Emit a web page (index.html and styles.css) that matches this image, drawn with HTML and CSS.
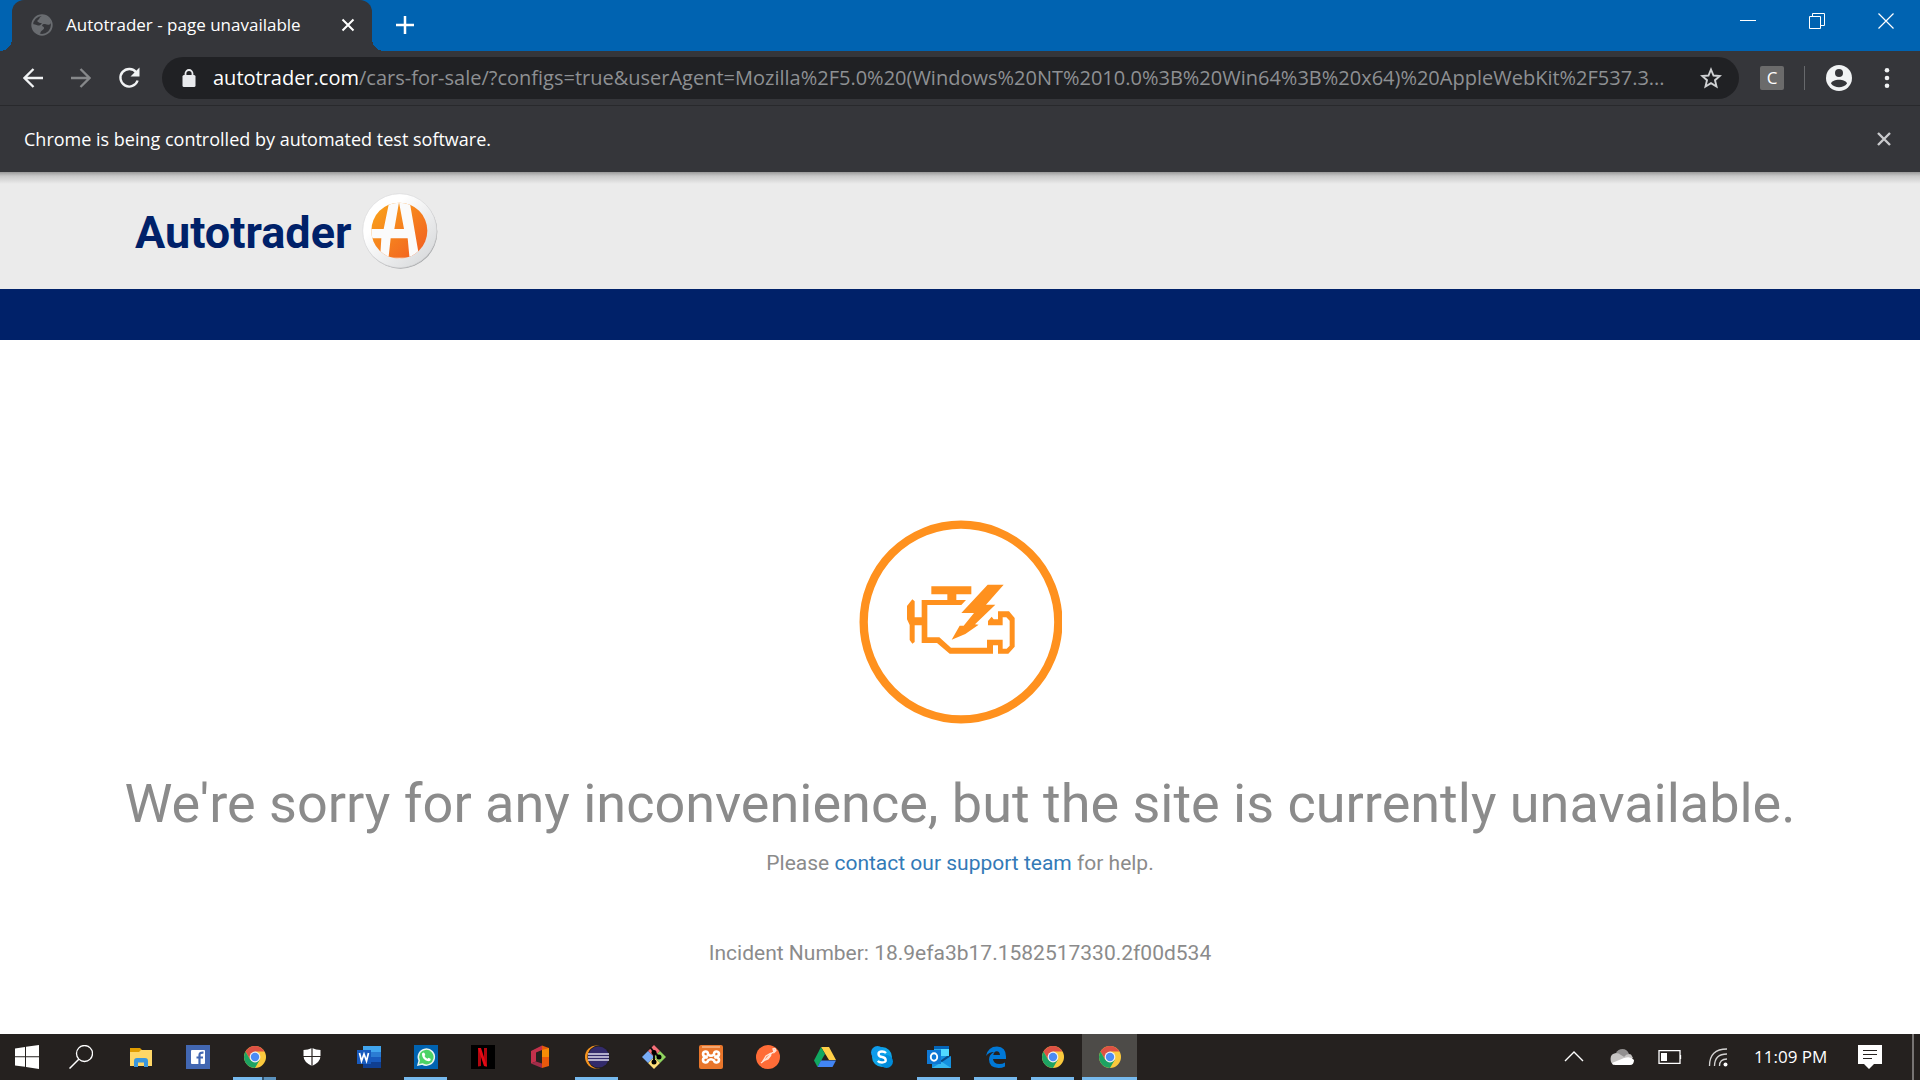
FILE: index.html
```html
<!DOCTYPE html>
<html lang="en">
<head>
<meta charset="utf-8">
<title>Autotrader - page unavailable</title>
<link rel="stylesheet" href="styles.css">
</head>
<body>
<svg class="sprite" aria-hidden="true">
  <symbol id="chrome" viewBox="0 0 24 24">
    <circle cx="12" cy="12" r="11" fill="#fbc93d"/>
    <path d="M2.5 6.5A11 11 0 0 1 21.5 6.5H12L7.2 14.8Z" fill="#dd5144"/>
    <path d="M2.5 6.5A11 11 0 0 0 12 23L16.8 14.7L7.2 14.8Z" fill="#1da362"/>
    <circle cx="12" cy="12" r="5.4" fill="#f1f1f1"/>
    <circle cx="12" cy="12" r="4.2" fill="#4c8bf5"/>
  </symbol>
</svg>

<header class="browser">
  <div class="tabstrip">
    <div class="tab">
      <svg class="favicon" viewBox="0 0 22 22"><circle cx="11" cy="11" r="9.8" fill="none" stroke="#696c70" stroke-width="1.8"/><path d="M13 1.5C8 2 9 5 7 6s1 3 3 3-1 3-3 2.500S3 10 1.500 10C1 15 4 19 8 20.500c2-1 1-3 3-4s3-3 1-4 0-3 2-2.500 4 2 6-1C19.500 5 16 2 13 1.500Z" fill="#696c70"/></svg>
      <span class="tab-title">Autotrader - page unavailable</span>
      <button class="icon-button tab-close" aria-label="Close tab"><svg width="14" height="14" viewBox="0 0 14 14"><path d="M1.500 1.500l11 11m0-11l-11 11" stroke="#fff" stroke-width="2"/></svg></button>
    </div>
    <button class="icon-button new-tab" aria-label="New tab"><svg width="18" height="18" viewBox="0 0 18 18"><path d="M9 0v18M0 9h18" stroke="#fff" stroke-width="2.500"/></svg></button>
    <div class="window-controls">
      <button class="icon-button" aria-label="Minimize"><svg width="16" height="16" viewBox="0 0 16 16"><path d="M0 7.500h16" stroke="#fff"/></svg></button>
      <button class="icon-button" aria-label="Restore"><svg width="16" height="16" viewBox="0 0 16 16"><path d="M.5 3.500h11v12H.5zM3.500 3V.5h12v12h-3.500" fill="none" stroke="#fff"/></svg></button>
      <button class="icon-button" aria-label="Close window"><svg width="16" height="16" viewBox="0 0 16 16"><path d="M.5 .5l15 15m0-15l-15 15" stroke="#fff" stroke-width="1.200"/></svg></button>
    </div>
  </div>

  <div class="toolbar">
    <div class="nav-buttons">
      <button class="icon-button" aria-label="Back"><svg width="20" height="20" viewBox="0 0 20 20"><path d="M20 10H2M10.500 1L1.500 10l9 9" fill="none" stroke="#f1f3f4" stroke-width="2.300"/></svg></button>
      <button class="icon-button" aria-label="Forward"><svg width="20" height="20" viewBox="0 0 20 20"><path d="M0 10h18M9.500 1l9 9-9 9" fill="none" stroke="#86888a" stroke-width="2.300"/></svg></button>
      <button class="icon-button" aria-label="Reload"><svg width="22" height="22" viewBox="0 0 22 22"><path d="M18.300 5.500A8.800 8.800 0 1 0 19.600 13.500" fill="none" stroke="#f1f3f4" stroke-width="2.400"/><path d="M21.500 .5v9h-9z" fill="#f1f3f4"/></svg></button>
    </div>
    <div class="address">
      <svg width="14" height="18" viewBox="0 0 14 18"><rect x="0.500" y="6" width="13" height="12" rx="1.500" fill="#e8eaed"/><path d="M3.500 7V4.500a3.500 3.500 0 0 1 7 0V7" fill="none" stroke="#e8eaed" stroke-width="1.800"/></svg>
      <span class="url"><span class="host">autotrader.com</span>/cars-for-sale/?configs=true&amp;userAgent=Mozilla%2F5.0%20(Windows%20NT%2010.0%3B%20Win64%3B%20x64)%20AppleWebKit%2F537.3...</span>
      <button class="icon-button" aria-label="Bookmark this page"><svg width="22" height="22" viewBox="0 0 22 22"><path d="M11 2.500l2.500 6 6.300.5-4.800 4.200 1.500 6.300-5.500-3.400-5.500 3.400L7 13.200 2.200 9l6.300-.5z" fill="none" stroke="#d0d2d4" stroke-width="1.900"/></svg></button>
    </div>
    <button class="extension">C</button>
    <span class="separator"></span>
    <button class="icon-button profile" aria-label="Profile"><svg width="26" height="26" viewBox="0 0 26 26"><circle cx="13" cy="13" r="13" fill="#f1f3f4"/><circle cx="13" cy="8" r="4" fill="#35363a"/><path d="M5 18.500c1.500-5 14.500-5 16 0-3.500 5-12.500 5-16 0z" fill="#35363a"/></svg></button>
    <button class="icon-button menu" aria-label="Menu"><svg width="6" height="20" viewBox="0 0 6 20"><g fill="#f1f3f4"><circle cx="3" cy="2.300" r="2.300"/><circle cx="3" cy="10" r="2.300"/><circle cx="3" cy="17.700" r="2.300"/></g></svg></button>
  </div>

  <div class="infobar">
    <span>Chrome is being controlled by automated test software.</span>
    <button class="icon-button" aria-label="Dismiss"><svg width="14" height="14" viewBox="0 0 14 14"><path d="M1 1l12 12m0-12L1 13" stroke="#c9cacc" stroke-width="2.400"/></svg></button>
  </div>
</header>

<div class="site-header">
  <a class="logo" href="#">
    <span class="wordmark">Autotrader</span>
    <svg width="76" height="76" viewBox="0 0 228 228">
      <defs>
        <linearGradient id="disc" x1="0" y1="0" x2="1" y2="1"><stop offset=".3" stop-color="#fff"/><stop offset="1" stop-color="#d2d4d6"/></linearGradient>
        <linearGradient id="orange" x1="0" y1="0" x2="1" y2="1"><stop offset="0" stop-color="#faa61a"/><stop offset="1" stop-color="#f15a22"/></linearGradient>
        <clipPath id="inner"><circle cx="112" cy="113" r="84"/></clipPath>
      </defs>
      <circle cx="115" cy="116" r="111" fill="#a5a7a9"/>
      <circle cx="113" cy="113" r="111" fill="url(#disc)" stroke="#d9dadb" stroke-width="2"/>
      <circle cx="112" cy="113" r="84" fill="url(#orange)"/>
      <g clip-path="url(#inner)" fill="#fbfbfb">
        <path d="M83 20H142L173 200H143L137 136H86L79 200H54L58 136H20V108H65ZM111 28L97 108H126Z" fill-rule="evenodd"/>
        <path d="M70 194h90v20H70z"/>
      </g>
    </svg>
  </a>
</div>
<div class="site-nav"></div>

<main class="message">
  <svg class="engine" viewBox="57 60 610 612">
    <circle cx="365" cy="366" r="292" fill="none" stroke="#ff911e" stroke-width="25"/>
    <g fill="#ff911e">
      <path d="M276 259H396V283H351V300H380L366 315H264V412H300L335 443H443V419H490V446H502L511 437V362L501 352H490V376H446V363L457 350L463 358H476V334H509L526 354V440L507 461H476V436H461V461H331L293 429H247V376H226V426L219 431L211 420V375L203 358V318L219 298L226 304V352H247V300H324V283H276Z"/>
      <path d="M445 254H493L440 314H468L407 373L418 374L378 402L337 419L361 377H373L404 339H366Z"/>
    </g>
  </svg>
  <h1>We're sorry for any inconvenience, but the site is currently unavailable.</h1>
  <p class="help">Please <a href="#">contact our support team</a> for help.</p>
  <p class="incident">Incident Number: 18.9efa3b17.1582517330.2f00d534</p>
</main>

<footer class="taskbar">
  <button class="system" aria-label="Start"><svg viewBox="0 0 24 24"><path d="M0 3.500L10 2v9.300H0zM11 1.800L24 0v11.300H11zM0 12.300h10v9.500L0 20.500zM11 12.300h13V24l-13-1.900z" fill="#fff"/></svg></button>
  <button class="system" aria-label="Search"><svg viewBox="0 0 24 24"><circle cx="15.500" cy="8.500" r="8" fill="none" stroke="#fff" stroke-width="1.300"/><path d="M9.800 14.200L.5 23.500" stroke="#fff" stroke-width="1.500"/></svg></button>
  <div class="apps">
    <button class="app" aria-label="File Explorer"><svg viewBox="0 0 24 24"><path d="M1 3h10l2 2-2 3H1z" fill="#e19d00"/><path d="M1 7h9l2-2h11v16H1z" fill="#ffd767"/><path d="M5 22v-6q0-3 3-3h8q3 0 3 3v6h-4v-4.500H9V22z" fill="#3a96dd"/></svg></button>
    <button class="app" aria-label="Facebook"><svg viewBox="0 0 24 24"><path d="M0 0h24v24H0z" fill="#4267b2"/><rect x="5" y="5" width="14" height="14" rx="1" fill="#fff"/><path d="M13.500 19v-9q0-2.700 4-2.300M10.500 12.500h6.500" fill="none" stroke="#4267b2" stroke-width="2.200"/></svg></button>
    <button class="app running grouped" aria-label="Chrome"><svg><use href="#chrome"/></svg></button>
    <button class="app" aria-label="Windows Security"><svg viewBox="0 0 24 24"><path d="M12 3q4 2 8.500 2v6q0 6-8.500 10-8.500-4-8.500-10V5Q8 5 12 3z" fill="#fff"/><path d="M12 3v18M3 11.500h18" stroke="#2b2523" stroke-width="1.200"/></svg></button>
    <button class="app" aria-label="Word"><svg viewBox="0 0 24 24"><path d="M6 1h18v6H6z" fill="#41a5ee"/><path d="M6 7h18v5H6z" fill="#2b7cd3"/><path d="M6 12h18v5H6z" fill="#185abd"/><path d="M6 17h18v6H6z" fill="#103f91"/><path d="M0 5h14v14H0z" fill="#185abd"/><path d="M2.500 8l2 8L7 9l2.500 7 2-8" fill="none" stroke="#fff" stroke-width="1.700"/></svg></button>
    <button class="app running" aria-label="WhatsApp"><svg viewBox="0 0 24 24"><path d="M0 0h24v24H0z" fill="#0063b1"/><path d="M4 20l1.200-4.300A8 8 0 1 1 8.300 19z" fill="#4bd366" stroke="#e9f5ee" stroke-width="1.500"/><path d="M8.500 8q1-1 2 0l.8 2-.8 1q1 2 3 2.700l1-1 2 1q.7 2-2 2.500-6-1-6.600-7 0-.7.600-1.200" fill="#fff"/></svg></button>
    <button class="app" aria-label="Netflix"><svg viewBox="0 0 24 24"><path d="M0 0h24v24H0z" fill="#000"/><path d="M7 3h3v18l-3 .5zM13 3h3v18.500l-3-.5z" fill="#b1060f"/><path d="M7 3h3l6 18.500-3-.5z" fill="#e50914"/></svg></button>
    <button class="app" aria-label="Office"><svg viewBox="0 0 24 24"><path d="M3 6l11-5.500V5L8 7.500v9L3 18.500z" fill="#c4314b"/><path d="M14 .5L21 3v18l-7 2z" fill="#e8590c"/><path d="M14 5l7-2v9h-7z" fill="#f48c06"/><path d="M3 18.500l5-2 6 2V23z" fill="#a12d49"/></svg></button>
    <button class="app running" aria-label="Eclipse"><svg viewBox="0 0 24 24"><circle cx="11.500" cy="12" r="11.500" fill="#f7941e"/><circle cx="14" cy="12" r="11.500" fill="#231f20"/><circle cx="13.500" cy="12" r="10.500" fill="#332b6b"/><path d="M3 9h21M3 12h21M3 15h21" stroke="#dedbed" stroke-width="1.500"/></svg></button>
    <button class="app" aria-label="Git"><svg viewBox="0 0 24 24"><path d="M12 0l6 6-6 6-6-6z" fill="#f56f78"/><path d="M18 6l6 6-6 6-6-6z" fill="#8fd45f"/><path d="M12 12l6 6-6 6-6-6z" fill="#ffe07a"/><path d="M6 6l6 6-6 6-6-6z" fill="#79adf7"/><path d="M8 2l4 5v11M12 7l5 5" stroke="#111" stroke-width="2" fill="none"/><circle cx="12" cy="7.500" r="2.500"/><circle cx="17" cy="12" r="2.500"/><circle cx="12" cy="17" r="2.500"/></svg></button>
    <button class="app" aria-label="XAMPP"><svg viewBox="0 0 24 24"><rect width="24" height="24" rx="2" fill="#e9762b"/><path d="M3 2h18" stroke="#f9b98a" stroke-width="1.500"/><path d="M9 9.500V8.500A2.500 2.500 0 1 0 6.500 11.500H7.500Q8 12 7.500 12.500H6.500A2.500 2.500 0 1 0 9 15.500Q12 13 15 15.500A2.500 2.500 0 1 0 17.500 12.500H16.500Q16 12 16.500 11.500H17.500A2.500 2.500 0 1 0 15 8.500V9.500Q12 12 9 9.500Z" fill="none" stroke="#fff" stroke-width="2.600"/></svg></button>
    <button class="app" aria-label="Postman"><svg viewBox="0 0 24 24"><circle cx="12" cy="12" r="12" fill="#ff6c37"/><path d="M19 5L9 15l-4 3M17 4l2-.5 1 2-2 2zM15 8l-5 3-3 5 5-2 3-4" fill="none" stroke="#ffe4d7" stroke-width="1.300"/></svg></button>
    <button class="app" aria-label="Google Drive"><svg viewBox="0 0 24 24"><path d="M8 2h8l7 13h-7z" fill="#ffcf48"/><path d="M8 2l4 7-7.500 13L1 15.500z" fill="#11a861"/><path d="M8 15.500h15L19.500 22h-15z" fill="#4285f4"/></svg></button>
    <button class="app" aria-label="Skype"><svg viewBox="0 0 24 24"><circle cx="12" cy="12" r="10" fill="#0ea5e9"/><circle cx="7.500" cy="7.500" r="6.500" fill="#0e9bea"/><circle cx="16.500" cy="16.500" r="6.500" fill="#008cdb"/><path d="M16 8q-1.500-1.500-4-1.500-3.500 0-3.500 2.500t3.500 3 3.700 3-3.700 2.500q-2.800 0-4.300-1.500" fill="none" stroke="#fff" stroke-width="2.400"/></svg></button>
    <button class="app running" aria-label="Outlook"><svg viewBox="0 0 24 24"><path d="M7 1h15v10H7z" fill="#28a8ea"/><path d="M7 1h15v3H7z" fill="#0364b8"/><path d="M14 4h8v7h-8z" fill="#50d9ff"/><path d="M5 11h19v12H5z" fill="#1490df"/><path d="M24 11l-9 6-2-1 7-5z" fill="#0a4a85"/><path d="M5 23l10-6 9 6z" fill="#35b8f1"/><path d="M0 5h14v14H0z" fill="#0f78d4"/><ellipse cx="7" cy="12" rx="3.200" ry="3.700" fill="none" stroke="#fff" stroke-width="1.900"/></svg></button>
    <button class="app running" aria-label="Edge"><svg viewBox="0 0 24 24"><path d="M2 11Q4 1.500 13 1.500q9 .5 9 10V14H9q.5 5 6.500 5 3 0 5.500-1.500v4Q18 23 14.500 23 5 22.500 5 14.500 5 9.500 10 7q-5 0-8 4zM9.300 10H16q-.3-3.800-3.200-3.800T9.300 10z" fill="#0078d7" fill-rule="evenodd"/></svg></button>
    <button class="app running" aria-label="Chrome"><svg><use href="#chrome"/></svg></button>
    <button class="app running active" aria-label="Chrome"><svg><use href="#chrome"/></svg></button>
  </div>
  <div class="tray">
    <button class="tray-button" aria-label="Show hidden icons"><svg viewBox="0 0 24 24"><path d="M3 16l9-9 9 9" fill="none" stroke="#fff" stroke-width="1.400"/></svg></button>
    <button class="tray-button" aria-label="OneDrive"><svg viewBox="0 0 24 24"><path d="M6 8q2-4 6.500-4T19 9l-5 4z" fill="#929090"/><path d="M1 17Q-1 9 6 8q3 0 5 2l5 3-13 7z" fill="#c6c4c3"/><path d="M14 12q3-4 7-2.500L23 13l-6 3z" fill="#c6c4c3"/><path d="M2 18l12-5q7-2 10 2 0 5-4 5H5q-2 0-3-2z" fill="#fff"/></svg></button>
    <button class="tray-button" aria-label="Battery"><svg viewBox="0 0 24 24"><path d="M1 5.700h21v12.600H1zM22.500 10v4" fill="none" stroke="#fff" stroke-width="1.300"/><path d="M3 8h6v8H3z" fill="#fff"/></svg></button>
    <button class="tray-button" aria-label="Network"><svg viewBox="0 0 24 24"><g fill="none" stroke="#d4d3d2" stroke-width="1.300"><path d="M3.500 21Q3.500 4 21 4M8.500 21Q8.500 9 21 9M13.500 21q0-7 7.500-7"/></g><circle cx="19.500" cy="19.500" r="2" fill="#fff"/></svg></button>
    <time class="clock">11:09 PM</time>
    <button class="notifications" aria-label="Notifications"><svg viewBox="0 0 24 24"><path d="M0 0h24v19h-8l-5 5-5-5H0z" fill="#fff"/><path d="M5 5.500h14M5 9.500h14M5 13.500h9" stroke="#25211f" stroke-width="1.200"/></svg></button>
    <span class="show-desktop"></span>
  </div>
</footer>
</body>
</html>
```
FILE: styles.css
```css
* { box-sizing: border-box; }

body {
  margin: 0;
  min-height: 100vh;
  display: flex;
  flex-direction: column;
  background: #fff;
  font-family: Roboto, "Liberation Sans", sans-serif;
}

button {
  margin: 0;
  padding: 0;
  border: 0;
  background: none;
  color: inherit;
  font: inherit;
}

svg { display: block; flex: none; }
.sprite { position: absolute; width: 0; height: 0; }

.icon-button {
  display: flex;
  align-items: center;
  justify-content: center;
}

/* Browser chrome */
.browser {
  background: #35363a;
  color: #fff;
  font-family: "Open Sans", "Noto Sans", sans-serif;
}

.tabstrip {
  display: flex;
  height: 51px;
  padding-left: 12px;
  background: #0063b1;
}

.tab {
  position: relative;
  display: flex;
  align-items: center;
  width: 360px;
  padding: 0 16px 2px 19px;
  border-radius: 12px 12px 0 0;
  background: #35363a;
}

.tab::before,
.tab::after {
  content: "";
  position: absolute;
  bottom: 0;
  width: 12px;
  height: 12px;
}
.tab::before { right: 100%; background: radial-gradient(circle at 0 0, #0063b1 12px, #35363a 12px); }
.tab::after { left: 100%; background: radial-gradient(circle at 100% 0, #0063b1 12px, #35363a 12px); }

.favicon { width: 22px; height: 22px; }
.tab-title { flex: 1; margin-left: 13px; font-size: 17px; line-height: 24px; white-space: nowrap; }
.tab-close { width: 16px; height: 24px; }
.new-tab { width: 66px; padding-bottom: 2px; }
.window-controls { display: flex; margin-left: auto; height: 42px; }
.window-controls .icon-button { width: 69px; }

.toolbar {
  display: flex;
  align-items: center;
  height: 55px;
  padding: 0 17px 0 9px;
  border-bottom: 1px solid #28292c;
}
.nav-buttons { display: flex; width: 153px; }
.nav-buttons .icon-button { width: 48px; height: 42px; }

.address {
  display: flex;
  flex: 1;
  min-width: 0;
  align-items: center;
  height: 42px;
  padding: 0 17px 0 20px;
  border-radius: 21px;
  background: #202124;
}
.url {
  flex: 1;
  min-width: 0;
  margin: 0 16px 0 17px;
  overflow: hidden;
  color: #8e9093;
  font-size: 20px;
  line-height: 30px;
  white-space: nowrap;
}
.host { color: #fff; }

.extension {
  width: 24px;
  height: 24px;
  margin-left: 21px;
  border-radius: 2px;
  background: #6b6b6b;
  font-size: 17px;
  line-height: 24px;
}
.separator { width: 1px; height: 24px; margin: 0 20px; background: #67696c; }
.profile { width: 28px; height: 28px; }
.menu { width: 32px; height: 28px; margin-left: 18px; }

.infobar {
  display: flex;
  align-items: center;
  justify-content: space-between;
  height: 66px;
  padding: 0 29px 0 24px;
  font-size: 18px;
  line-height: 26px;
}

/* Site */
.site-header {
  display: flex;
  align-items: center;
  height: 117px;
  padding: 0 135px;
  background: linear-gradient(#999 0, #c8c8c8 4px, #ebebeb 12px);
}
.logo {
  display: flex;
  align-items: center;
  gap: 11px;
  color: #002169;
  text-decoration: none;
}
.wordmark {
  padding-top: 4px;
  font-size: 45px;
  font-weight: 700;
  line-height: 60px;
}
.site-nav { height: 51px; background: #002169; }

.message {
  flex: 1;
  padding: 180px 24px 0;
  color: #8b8b8b;
  text-align: center;
}
.engine { width: 204px; height: 204px; margin: 0 auto; }
h1 { margin: 50px 0 0; font-size: 54px; font-weight: 400; line-height: 60px; }
p { margin: 0; font-size: 21px; line-height: 30px; }
.help { margin-top: 14px; }
.incident { margin-top: 60px; }
.message a { color: #337ab7; text-decoration: none; }

/* Windows taskbar */
.taskbar {
  display: flex;
  height: 46px;
  background: #25211f;
  color: #fff;
  font-family: "Open Sans", "Noto Sans", sans-serif;
}
.taskbar button { display: flex; align-items: center; justify-content: center; }
.taskbar svg { width: 24px; height: 24px; }
.system { width: 54px; }
.apps { display: flex; gap: 2px; margin-left: 5px; }
.app { position: relative; width: 55px; }
.running::after {
  content: "";
  position: absolute;
  right: 6px;
  bottom: 0;
  left: 6px;
  height: 3px;
  background: #76b9ed;
}
.grouped::after { background: linear-gradient(90deg, #76b9ed 29px, #34536b 29px 31px, #5b92bd 31px); }
.active { background: #4d4b48; }
.active::after { right: 0; left: 0; }

.tray { display: flex; align-items: center; margin-left: auto; }
.tray-button { width: 48px; height: 46px; }
.clock { margin-left: 12px; width: 74px; font-size: 17px; line-height: 24px; white-space: nowrap; }
.notifications { width: 84px; height: 46px; }
.show-desktop { width: 8px; height: 46px; border-left: 2px solid #777473; }
```
